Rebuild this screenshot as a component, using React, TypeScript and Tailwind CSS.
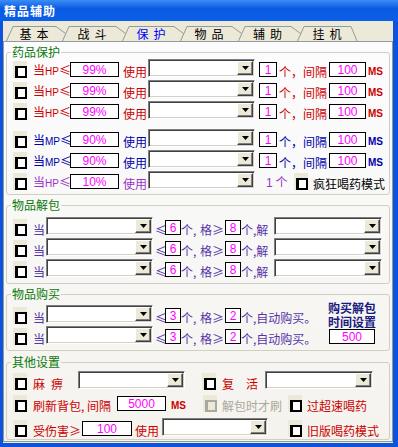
import React from "react";

// XP-style "protect" tab of a game helper dialog

const RED = "text-[#cc0000]";
const BLUE = "text-[#0000aa]";
const PURPLE = "text-[#9933cc]";
const SLATE = "text-[#5533aa]";

function Check({ disabled = false, className = "" }: { disabled?: boolean; className?: string }) {
  return (
    <span className={`flex h-[17px] w-[14px] shrink-0 items-end justify-end bg-[#ece9d8] ${className}`}>
      <span
        className={`block h-[12px] w-[12px] border-2 border-l-[3px] ${
          disabled ? "border-[#a9a89c] bg-[#ece9d8]" : "border-black bg-white"
        }`}
      />
    </span>
  );
}

function Combo({ w, className = "" }: { w: string; className?: string }) {
  return (
    <span
      className={`${w} ${className} mb-[1px] flex h-[18px] shrink-0 justify-end border border-t-[#7f7f7f] border-l-[#7f7f7f] border-r-white border-b-white bg-white p-[1px] shadow-[inset_1px_1px_0_#404040,inset_-1px_-1px_0_#d4d0c8]`}
    >
      <span className="flex w-[16px] items-center justify-center border border-t-white border-l-white border-r-[#404040] border-b-[#404040] bg-[#ece9d8] shadow-[inset_-1px_-1px_0_#808080]">
        <svg width="7" height="4" viewBox="0 0 7 4">
          <path d="M0 0h7L3.5 4z" fill="#000" />
        </svg>
      </span>
    </span>
  );
}

function Box({ w, v, className = "" }: { w: string; v: string; className?: string }) {
  return (
    <span
      className={`${w} ${className} mb-[1px] flex h-[15px] shrink-0 items-center justify-center border border-black bg-white font-['Liberation_Sans',sans-serif] text-[12px] leading-none text-[#ff00ff]`}
    >
      {v}
    </span>
  );
}

function T({ children, className = "" }: { children: React.ReactNode; className?: string }) {
  return <span className={`shrink-0 whitespace-nowrap leading-[13px] ${className}`}>{children}</span>;
}

function Ms({ color, className = "" }: { color: string; className?: string }) {
  return (
    <T className={`${color} ${className} font-['Liberation_Sans',sans-serif] text-[10px] font-bold`}>MS</T>
  );
}

function Group({ title, className = "", children }: { title: string; className?: string; children: React.ReactNode }) {
  return (
    <fieldset className={`rounded-[3px] border border-[#d0d0bf] ${className}`}>
      <legend className="ml-[4px] px-[1px] text-[12px] leading-[12px] text-[#0a7a0a]">{title}</legend>
      {children}
    </fieldset>
  );
}

const rowCls = "flex h-[20px] items-end pb-[1px]";

function HpRow({ color, kind, pct }: { color: string; kind: string; pct: string }) {
  return (
    <div className={rowCls}>
      <Check className="ml-[6px]" />
      <T className={`ml-[6px] w-[37px] ${color}`}>
        当<span className="font-['Liberation_Sans',sans-serif] text-[10px]">{kind}</span>≤
      </T>
      <Box w="w-[49px]" v={pct} />
      <T className={`ml-[4px] w-[24px] ${color}`}>使用</T>
      <Combo w="w-[107px]" className="ml-[1px]" />
      <Box w="w-[18px]" v="1" className="ml-[4px]" />
      <T className={`ml-[2px] w-[48px] ${color}`}>个，间隔</T>
      <Box w="w-[37px]" v="100" className="ml-[2px]" />
      <Ms color={color} className="ml-[2px]" />
    </div>
  );
}

function PackRow({ a, b, tail }: { a: string; b: string; tail: React.ReactNode }) {
  return (
    <div className={rowCls}>
      <Check className="ml-[6px]" />
      <T className={`ml-[6px] w-[12px] ${SLATE}`}>当</T>
      <Combo w="w-[107px]" className="ml-[1px]" />
      <T className={`ml-[2px] w-[10px] ${SLATE}`}>≤</T>
      <Box w="w-[16px]" v={a} />
      <T className={`w-[19px] ${SLATE}`}>个,</T>
      <T className={`w-[25px] ${SLATE}`}>格≥</T>
      <Box w="w-[16px]" v={b} />
      {tail}
    </div>
  );
}

const tabs: { label: string; w: string; px: number; active?: boolean }[] = [
  { label: "基本", w: "w-[56px]", px: 56 },
  { label: "战斗", w: "w-[60px]", px: 60 },
  { label: "保护", w: "w-[58px]", px: 58, active: true },
  { label: "物品", w: "w-[58px]", px: 58 },
  { label: "辅助", w: "w-[59px]", px: 59 },
  { label: "挂机", w: "w-[60px]", px: 60 },
];

export default function App() {
  return (
    <div className="flex h-[447px] w-[398px] flex-col overflow-hidden bg-[#0d54dc] font-['Noto_Sans_CJK_SC',sans-serif] text-[12px] leading-none text-black">
      {/* title bar */}
      <div className="flex h-[21px] shrink-0 items-center bg-linear-to-b from-[#3a8cf6] via-[#0a5be4] via-40% to-[#0b5ee9] pl-[4px] text-[12px] font-bold tracking-[1px] text-white">
        精品辅助
      </div>

      <div className="mb-[4px] ml-[3px] mr-[5px] flex flex-1 flex-col bg-[#ece9d8]">
        {/* tabs */}
        <div className="flex h-[20px] shrink-0 pl-[3px]">
          {tabs.map((t, i) => (
            <div key={t.label} className={`relative h-full ${t.w}`}>
              <svg className="pointer-events-none absolute inset-0 overflow-visible" width={t.px} height={20}>
                <path
                  d={
                    i === tabs.length - 1
                      ? `M0.5 20 L7 5.5 L${t.px - 6} 5.5 L${t.px} 20`
                      : `M0.5 20 L7 5.5 L${t.px - 6} 5.5 L${t.px + 3.5} 12.5`
                  }
                  fill="none"
                  stroke="#919b9c"
                  strokeWidth={1}
                />
              </svg>
              <div
                className={`relative flex h-full items-end justify-center pb-[1px] pl-[5px] leading-[12px] tracking-[5px] ${
                  t.active ? "text-[#0000ff]" : "text-black"
                }`}
              >
                {t.label}
              </div>
            </div>
          ))}
        </div>

        {/* tab panel */}
        <div className="mb-[1px] flex flex-1 flex-col border border-[#919b9c] bg-linear-to-b from-[#fcfcfe] to-[#f4f3ee] px-[2px] pt-[4px]">
          <Group title="药品保护">
            <div className="flex flex-col gap-[1px] pb-[3px] pt-[1px]">
              <HpRow color={RED} kind="HP" pct="99%" />
              <HpRow color={RED} kind="HP" pct="99%" />
              <HpRow color={RED} kind="HP" pct="99%" />
              <div className="h-[6px]" />
              <HpRow color={BLUE} kind="MP" pct="90%" />
              <HpRow color={BLUE} kind="MP" pct="90%" />
              <div className={rowCls}>
                <Check className="ml-[6px]" />
                <T className={`ml-[6px] w-[37px] ${PURPLE}`}>
                  当<span className="font-['Liberation_Sans',sans-serif] text-[10px]">HP</span>≤
                </T>
                <Box w="w-[49px]" v="10%" />
                <T className={`ml-[4px] w-[24px] ${PURPLE}`}>使用</T>
                <Combo w="w-[107px]" className="ml-[1px]" />
                <T className={`ml-[11px] w-[26px] ${PURPLE}`}>
                  <span className="font-['Liberation_Sans',sans-serif]">1</span> 个
                </T>
                <Check className="ml-[2px]" />
                <T className="ml-[5px]">疯狂喝药模式</T>
              </div>
            </div>
          </Group>

          <Group title="物品解包" className="mt-[4px]">
            <div className="flex flex-col gap-[1px] pb-[4px] pt-[6px]">
              {[0, 1, 2].map((k) => (
                <PackRow
                  key={k}
                  a="6"
                  b="8"
                  tail={
                    <>
                      <T className={`w-[33px] ${SLATE}`}>个,解</T>
                      <Combo w="w-[108px]" />
                    </>
                  }
                />
              ))}
            </div>
          </Group>

          <Group title="物品购买" className="mt-[4px]">
            <div className="flex items-start pb-[4px] pt-[1px]">
              <div className="flex flex-1 flex-col gap-[1px] pt-[4px]">
                {[0, 1].map((k) => (
                  <PackRow key={k} a="3" b="2" tail={<T className={SLATE}>个,自动购买。</T>} />
                ))}
              </div>
              <div className="mr-[13px] flex w-[48px] flex-col">
                <span className="block font-bold leading-[14px] text-[#1a1a80]">购买解包</span>
                <span className="block font-bold leading-[14px] text-[#1a1a80]">时间设置</span>
                <Box w="w-[46px]" v="500" className="ml-[1px]" />
              </div>
            </div>
          </Group>

          <Group title="其他设置" className="mt-[5px]">
            <div className="flex flex-col pb-[1px] pt-[3px]">
              <div className={rowCls}>
                <Check className="ml-[6px]" />
                <T className={`ml-[6px] w-[45px] ${RED}`}>
                  麻<span className="ml-[6px]">痹</span>
                </T>
                <Combo w="w-[107px]" />
                <Check className="ml-[17px]" />
                <T className={`ml-[6px] w-[43px] ${RED}`}>复　活</T>
                <Combo w="w-[108px]" />
              </div>
              <div className={`${rowCls} mt-[2px]`}>
                <Check className="ml-[6px]" />
                <T className={`ml-[6px] w-[84px] ${RED}`}>刷新背包, 间隔</T>
                <Box w="w-[49px]" v="5000" />
                <Ms color={RED} className="ml-[5px] w-[13px]" />
                <Check disabled className="ml-[19px]" />
                <T className="ml-[5px] w-[63px] text-[#aca899]">解包时才刷</T>
                <Check className="ml-[3px]" />
                <T className={`ml-[5px] ${RED}`}>过超速喝药</T>
              </div>
              <div className={`${rowCls} mt-[5px]`}>
                <Check className="ml-[6px]" />
                <T className={`ml-[6px] w-[49px] ${RED}`}>受伤害≥</T>
                <Box w="w-[50px]" v="100" />
                <T className={`ml-[3px] w-[24px] ${RED}`}>使用</T>
                <Combo w="w-[106px]" className="ml-[3px]" />
                <Check className="ml-[20px]" />
                <T className={`ml-[5px] ${RED}`}>旧版喝药模式</T>
              </div>
            </div>
          </Group>
        </div>
      </div>
    </div>
  );
}
